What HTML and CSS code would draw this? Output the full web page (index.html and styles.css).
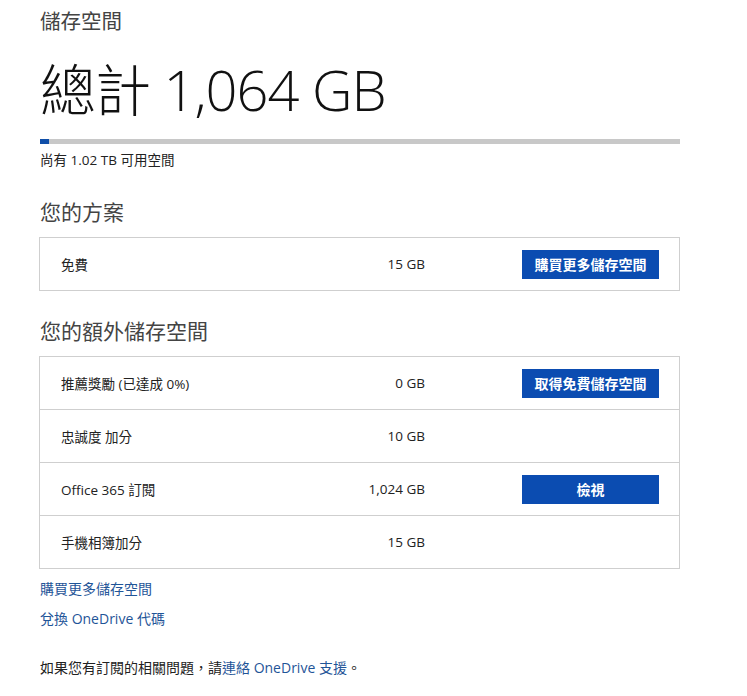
FILE: index.html
```html
<!DOCTYPE html>
<html lang="zh-Hant">
<head>
  <meta charset="UTF-8">
  <title>儲存空間</title>
  <link rel="stylesheet" href="styles.css">
</head>
<body>

  <div class="pagina">
    <h2 class="titulo">儲存空間</h2>
    <h1 class="total">總計 1,064 GB</h1>

    <div class="barra">
      <div class="barra-uso" style="width: 1.4%;"></div>
    </div>
    <p class="disponible">尚有 1.02 TB 可用空間</p>

    <h2 class="seccion">您的方案</h2>
    <div class="tabla">
      <div class="fila">
        <span class="nombre">免費</span>
        <span class="valor">15 GB</span>
        <a class="boton" href="#">購買更多儲存空間</a>
      </div>
    </div>

    <h2 class="seccion">您的額外儲存空間</h2>
    <div class="tabla">
      <div class="fila">
        <span class="nombre">推薦獎勵 (已達成 0%)</span>
        <span class="valor">0 GB</span>
        <a class="boton" href="#">取得免費儲存空間</a>
      </div>
      <div class="fila">
        <span class="nombre">忠誠度 加分</span>
        <span class="valor">10 GB</span>
      </div>
      <div class="fila">
        <span class="nombre">Office 365 訂閱</span>
        <span class="valor">1,024 GB</span>
        <a class="boton" href="#">檢視</a>
      </div>
      <div class="fila">
        <span class="nombre">手機相簿加分</span>
        <span class="valor">15 GB</span>
      </div>
    </div>

    <div class="enlaces">
      <a href="#">購買更多儲存空間</a>
      <a href="#">兌換 OneDrive 代碼</a>
    </div>

    <p class="pie">如果您有訂閱的相關問題，請<a href="#">連絡 OneDrive 支援</a>。</p>
  </div>

</body>
</html>
```

FILE: styles.css
```css
body {
  margin: 0;
  font-family: "Open Sans", "Noto Sans CJK TC", sans-serif;
  background-color: #fff;
  color: #222;
}

.pagina {
  width: 641px;
  padding: 8px 0 0 39px;
}

h1, h2, p {
  margin: 0;
  font-weight: normal;
}

.titulo {
  font-size: 20.5px;
  line-height: 26px;
  color: #444;
  padding-left: 1px;
}

.total {
  font-weight: 300;
  font-size: 56px;
  line-height: 72px;
  color: #111;
  margin-top: 19px;
  padding-left: 1px;
  letter-spacing: -1px;
}

.barra {
  height: 5px;
  margin: 14px 0 0 1px;
  background-color: #c8c8c8;
}

.barra-uso {
  height: 100%;
  background-color: #0f4ea8;
}

.disponible {
  font-size: 13.5px;
  line-height: 18px;
  margin-top: 7px;
  padding-left: 1px;
}

.seccion {
  font-size: 21px;
  line-height: 26px;
  color: #444;
  margin-top: 30px;
  padding-left: 1px;
}

.tabla {
  border: 1px solid #cfcfcf;
  margin-top: 12px;
}

.tabla + .seccion {
  margin-top: 27px;
}

.fila {
  display: grid;
  grid-template-columns: 1fr 100px 137px;
  column-gap: 97px;
  align-items: center;
  height: 52px;
  padding: 0 20px 0 21px;
  font-size: 13.5px;
  white-space: nowrap;
}

.fila + .fila {
  border-top: 1px solid #cfcfcf;
}

.valor {
  text-align: right;
}

.boton {
  grid-column: 3;
  display: block;
  height: 29px;
  line-height: 29px;
  text-align: center;
  background-color: #0b4cb1;
  color: #fff;
  font-size: 14px;
  font-weight: bold;
  text-decoration: none;
}

.enlaces {
  display: flex;
  flex-direction: column;
  gap: 11px;
  margin-top: 10px;
  padding-left: 1px;
}

.enlaces a,
.pie a {
  color: #1f5598;
  text-decoration: none;
  font-size: 14px;
  line-height: 19px;
}

.pie {
  font-size: 14px;
  line-height: 19px;
  margin-top: 30px;
  padding-left: 1px;
}
```
